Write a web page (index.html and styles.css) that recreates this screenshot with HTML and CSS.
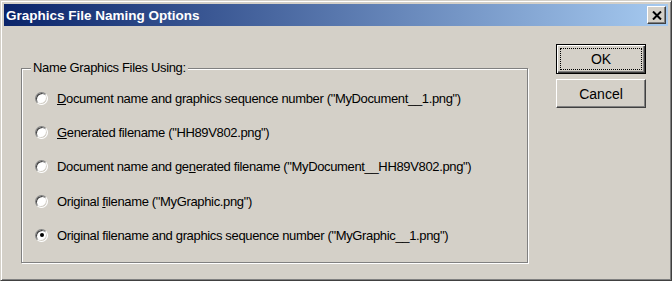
FILE: index.html
```html
<!DOCTYPE html>
<html lang="en">
<head>
    <meta charset="UTF-8">
    <title>Graphics File Naming Options</title>
    <link rel="stylesheet" href="styles.css">
</head>
<body>
    <div class="window">
        <div class="titlebar">
            <span class="title">Graphics File Naming Options</span>
            <button class="close" aria-label="Close">
                <svg width="10" height="9" viewBox="0 0 10 9">
                    <path d="M1 0.5 L9 8.5 M9 0.5 L1 8.5" stroke="#000" stroke-width="2" fill="none"/>
                </svg>
            </button>
        </div>

        <div class="dialog-body">
            <div class="group">
                <span class="legend">Name Graphics Files Using:</span>
                <ul class="options">
                    <li class="option"><span class="radio"></span><span><u>D</u>ocument name and graphics sequence number ("MyDocument__1.png")</span></li>
                    <li class="option"><span class="radio"></span><span><u>G</u>enerated filename ("HH89V802.png")</span></li>
                    <li class="option"><span class="radio"></span><span>Document name and ge<u>n</u>erated filename ("MyDocument__HH89V802.png")</span></li>
                    <li class="option"><span class="radio"></span><span>Original <u>f</u>ilename ("MyGraphic.png")</span></li>
                    <li class="option"><span class="radio checked"></span><span>Original filename and graphics sequence number ("MyGraphic__1.png")</span></li>
                </ul>
            </div>

            <div class="actions">
                <button class="btn default"><span class="focus">OK</span></button>
                <button class="btn">Cancel</button>
            </div>
        </div>
    </div>
</body>
</html>
```

FILE: styles.css
```css
* {
    margin: 0;
    padding: 0;
    box-sizing: border-box;
}

body {
    background-color: #d4d0c8;
    font-family: "Liberation Sans", Arial, sans-serif;
    font-size: 13px;
    letter-spacing: -0.35px;
    color: #000;
    overflow: hidden;
}

.window {
    width: 672px;
    height: 281px;
    padding: 3px;
    background: #d4d0c8;
    border: 1px solid;
    border-color: #d4d0c8 #404040 #404040 #d4d0c8;
    box-shadow: inset 1px 1px 0 #fff, inset -1px -1px 0 #808080;
}

.titlebar {
    height: 22px;
    display: flex;
    align-items: center;
    justify-content: space-between;
    padding-left: 2px;
    background: linear-gradient(to right, #0a246a, #a6caf0);
}

.title {
    color: #fff;
    font-weight: bold;
    font-size: 13.5px;
    letter-spacing: 0;
}

.close {
    width: 19px;
    height: 18px;
    margin-right: 2px;
    display: flex;
    align-items: center;
    justify-content: center;
    background: #d4d0c8;
    border: 1px solid;
    border-color: #fff #404040 #404040 #fff;
    box-shadow: inset -1px -1px 0 #808080;
}

.dialog-body {
    display: flex;
    align-items: flex-start;
    padding-left: 17px;
}

.group {
    position: relative;
    width: 507px;
    height: 195px;
    margin-top: 42px;
    border: 1px solid #808080;
    box-shadow: inset 1px 1px 0 #fff, 1px 1px 0 #fff;
}

.legend {
    position: absolute;
    top: -9px;
    left: 9px;
    padding: 0 2px;
    background: #d4d0c8;
    line-height: 16px;
}

.options {
    list-style: none;
    padding: 12px 0 0 13px;
}

.option {
    height: 34.3px;
    display: flex;
    align-items: center;
    gap: 9px;
}

.radio {
    width: 13px;
    height: 13px;
    border-radius: 50%;
    background: #fff;
    border: 1px solid;
    border-color: #808080 #fff #fff #808080;
    box-shadow: inset 1px 1px 0 #404040, inset -1px -1px 0 #d4d0c8;
    display: flex;
    align-items: center;
    justify-content: center;
}

.radio.checked::after {
    content: "";
    width: 4px;
    height: 4px;
    border-radius: 50%;
    background: #000;
}

.actions {
    display: flex;
    flex-direction: column;
    gap: 5px;
    margin-top: 18px;
    margin-left: 28px;
}

.btn {
    width: 90px;
    height: 29px;
    font-family: inherit;
    font-size: 14px;
    letter-spacing: 0;
    background: #d4d0c8;
    border: 1px solid;
    border-color: #fff #404040 #404040 #fff;
    box-shadow: inset -1px -1px 0 #808080;
}

.btn.default {
    height: 30px;
    border: 1px solid #000;
    box-shadow: inset 1px 1px 0 #fff, inset -1px -1px 0 #404040, inset -2px -2px 0 #808080;
    padding: 3px;
}

.focus {
    display: flex;
    align-items: center;
    justify-content: center;
    height: 100%;
    border: 1px dotted #000;
}
```
